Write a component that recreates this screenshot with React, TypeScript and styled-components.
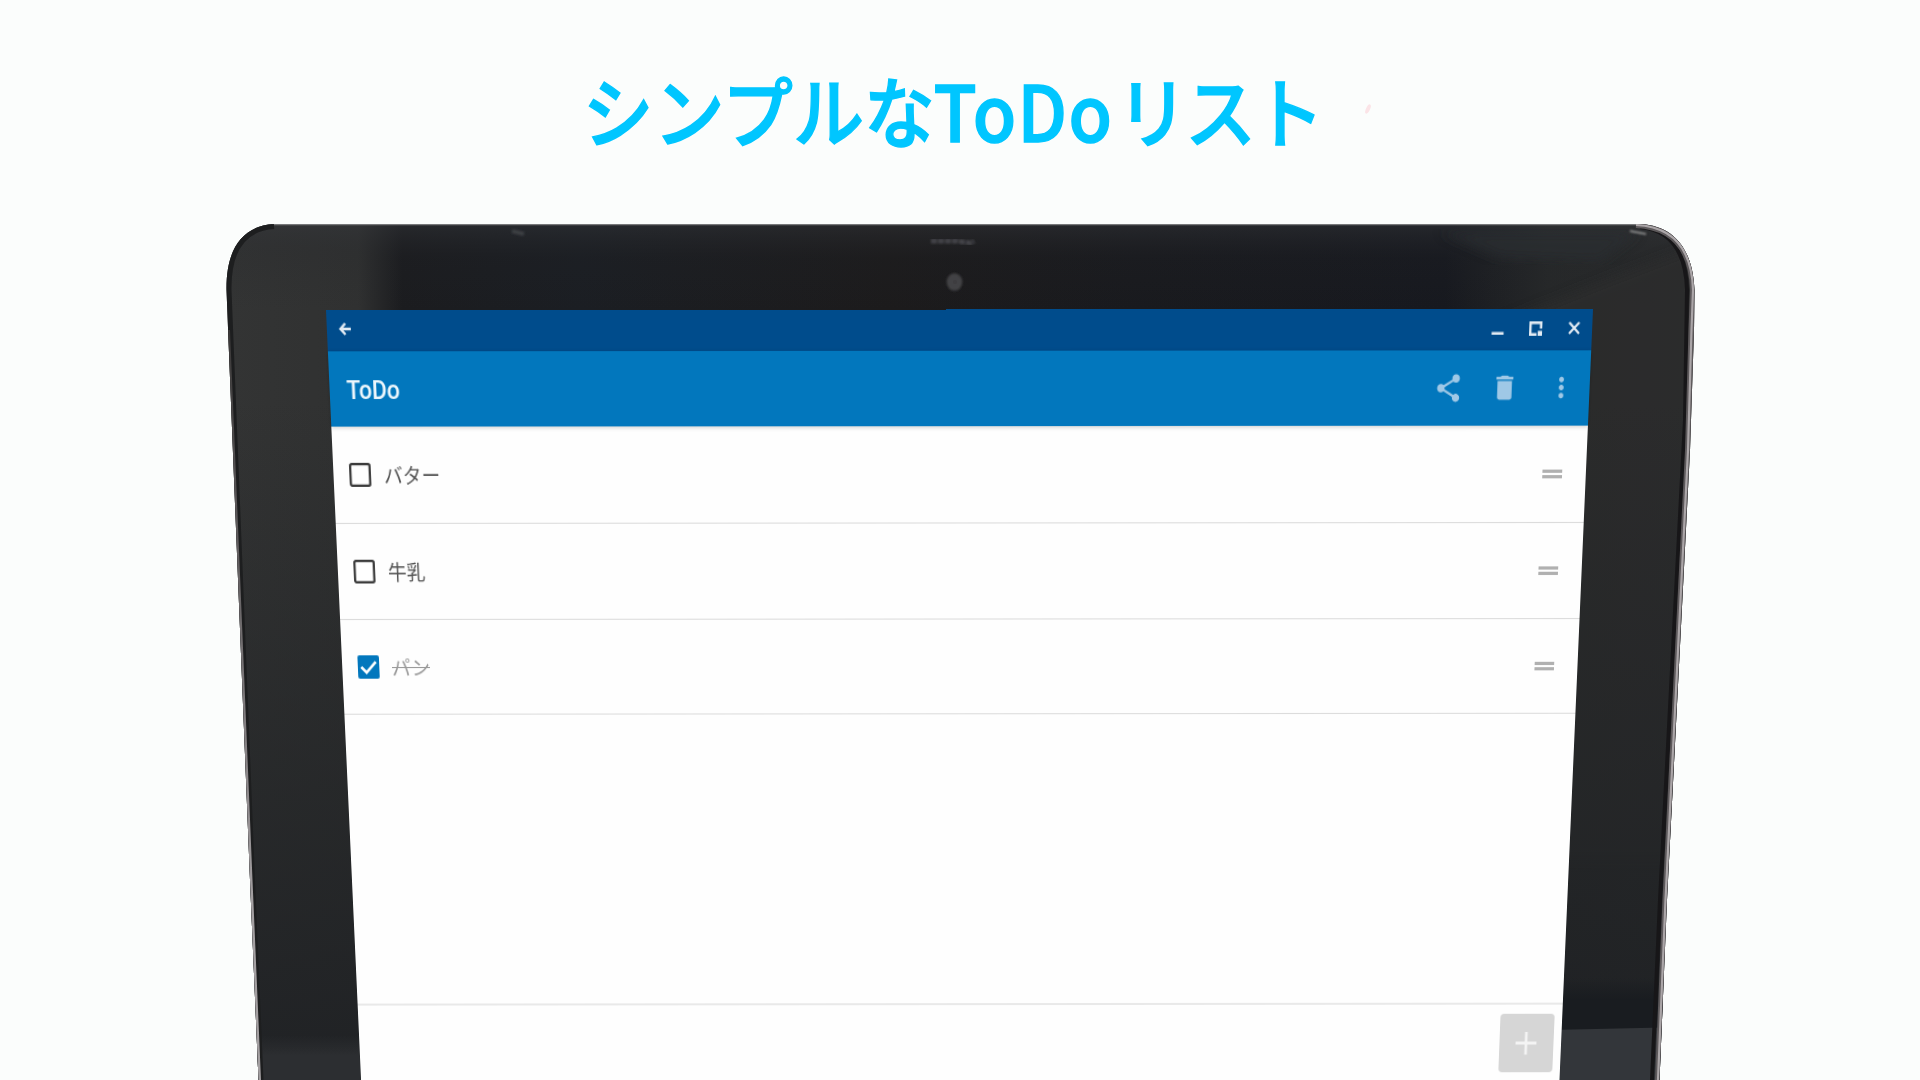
import { useState } from "react";
import styled, { createGlobalStyle } from "styled-components";

type Task = {
    id: number;
    label: string;
    done: boolean;
};

const initialTaskList: Task[] = [
    { id: 1, label: "バター", done: false },
    { id: 2, label: "牛乳", done: false },
    { id: 3, label: "パン", done: true },
];

const GlobalStyle = createGlobalStyle`
    body {
        margin: 0;
        background-color: #fbfdfc;
        font-family: Roboto, "Noto Sans CJK JP", sans-serif;
    }
`;

const Page = styled.div`
    width: 1920px;
    height: 1080px;
    overflow: hidden;
    background-color: #fbfdfc;
`;

// 見出し
const Header = styled.header`
    position: relative;
    height: 224px;
    display: flex;
    justify-content: center;
`;

const Title = styled.h1`
    margin: 0;
    padding: 53px 17px 0 0;
    color: #00c6ff;
    font-family: "Noto Sans CJK JP", sans-serif;
    font-size: 77px;
    font-weight: 500;
    line-height: 112px;
    white-space: nowrap;
    transform: scaleX(0.92);
    -webkit-text-stroke: 1.4px #00c6ff;
`;

const Latin = styled.span`
    margin: 0 4px 0 -1.5px;
    letter-spacing: 1.5px;
`;

const Tail = styled.span`
    letter-spacing: -3px;
`;

const Speck = styled.span`
    position: absolute;
    left: 1366px;
    top: 104px;
    width: 4px;
    height: 10px;
    border-radius: 50%;
    background-color: #fbe4e7;
    transform: rotate(25deg);
`;

const Stage = styled.main`
    position: relative;
    height: 770px;
    padding: 86px 0 0 326px;
`;

const Tablet = styled.svg`
    position: absolute;
    left: 0;
    top: 0;
    width: 1920px;
    height: 856px;
`;

// 画面(奥行きのある台形に変形する)
const Screen = styled.section`
    width: 1267px;
    height: 740px;
    display: flex;
    flex-direction: column;
    background-color: #fefefe;
    transform-origin: 0 0;
    transform: matrix3d(1, -0.0008, 0, 0, 0.051, 1.12, 0, 0.0000787, 0, 0, 1, 0, 0, 0, 0, 1);
`;

const WindowBar = styled.div`
    flex: none;
    box-sizing: border-box;
    height: 36.5px;
    padding: 0 12.5px 2px 11.5px;
    display: flex;
    align-items: center;
    justify-content: space-between;
    background-color: #004c8c;
`;

const WindowButtons = styled.div`
    display: flex;
    align-items: center;
    gap: 25.5px;
`;

const AppBar = styled.div`
    flex: none;
    height: 68.2px;
    padding-left: 17px;
    display: flex;
    align-items: center;
    justify-content: space-between;
    background-color: #0277bd;
    box-shadow: 0 1px 4px rgba(0, 0, 0, 0.2);
`;

const AppName = styled.span`
    padding-top: 3px;
    color: #eef7fc;
    font-size: 23px;
    font-weight: 500;
`;

const Actions = styled.div`
    display: flex;
`;

const Action = styled.div`
    width: 57px;
    display: flex;
    align-items: center;
    justify-content: center;
`;

const List = styled.ul`
    flex: none;
    height: 546.7px;
    margin: 0;
    padding: 0;
    list-style: none;
`;

// タスク1件
const Row = styled.li`
    box-sizing: border-box;
    height: 89.2px;
    padding: 0 24px 0 16px;
    display: flex;
    align-items: center;
    border-bottom: 1px solid #dcdcdc;
`;

const Label = styled.span<{
    $done: boolean;
}>`
    flex: 1;
    margin-left: 13px;
    font-family: "Noto Sans CJK JP", sans-serif;
    font-size: 19px;
    line-height: 28px;
    color: ${props => props.$done ? '#999' : '#555'};
    text-decoration: ${props => props.$done ? 'line-through' : 'none'};
`;

// 並べ替え用のつまみ
const Handle = styled.span`
    box-sizing: border-box;
    width: 20px;
    height: 8px;
    border-top: 3px solid #b0b0b0;
    border-bottom: 3px solid #b0b0b0;
`;

const Footer = styled.div`
    flex: 1;
    display: flex;
    justify-content: flex-end;
    align-items: flex-start;
    padding: 8.5px 8.5px 0 0;
    border-top: 2px solid #e9e9e9;
`;

const AddButton = styled.div`
    width: 57px;
    height: 58.5px;
    display: flex;
    align-items: center;
    justify-content: center;
    border-radius: 4px;
    background-color: #d6d6d6;
`;

// タブレット本体
const TabletBody = () => (
    <Tablet viewBox="0 224 1920 856">
        <defs>
            <linearGradient id="bezel" gradientUnits="userSpaceOnUse" x1="226" y1="0" x2="1695" y2="0">
                <stop offset="0" stopColor="#333434" />
                <stop offset="0.09" stopColor="#303131" />
                <stop offset="0.12" stopColor="#1b1c1f" />
                <stop offset="0.24" stopColor="#1b1e23" />
                <stop offset="0.45" stopColor="#1c1b1c" />
                <stop offset="0.62" stopColor="#191a1e" />
                <stop offset="0.83" stopColor="#17191f" />
                <stop offset="0.9" stopColor="#262829" />
                <stop offset="1" stopColor="#2a2b2c" />
            </linearGradient>
            <linearGradient id="topSheen" gradientUnits="userSpaceOnUse" x1="0" y1="224" x2="0" y2="310">
                <stop offset="0" stopColor="#34363a" stopOpacity="0.5" />
                <stop offset="0.4" stopColor="#24262a" stopOpacity="0.15" />
                <stop offset="1" stopColor="#24262a" stopOpacity="0" />
            </linearGradient>
            <linearGradient id="sideShade" gradientUnits="userSpaceOnUse" x1="0" y1="400" x2="0" y2="1080">
                <stop offset="0" stopColor="#222426" stopOpacity="0" />
                <stop offset="0.6" stopColor="#222426" stopOpacity="0.7" />
                <stop offset="1" stopColor="#1e2023" stopOpacity="0.9" />
            </linearGradient>
            <linearGradient id="leftFloor" gradientUnits="userSpaceOnUse" x1="0" y1="1035" x2="0" y2="1056">
                <stop offset="0" stopColor="#2c2e31" stopOpacity="0" />
                <stop offset="1" stopColor="#2c2e31" />
            </linearGradient>
            <linearGradient id="rightDark" gradientUnits="userSpaceOnUse" x1="0" y1="978" x2="0" y2="1000">
                <stop offset="0" stopColor="#191c20" stopOpacity="0" />
                <stop offset="1" stopColor="#191c20" />
            </linearGradient>
            <linearGradient id="rim" gradientUnits="userSpaceOnUse" x1="0" y1="330" x2="0" y2="900">
                <stop offset="0" stopColor="#3a3838" />
                <stop offset="0.6" stopColor="#777375" />
                <stop offset="1" stopColor="#a39fa1" />
            </linearGradient>
            <clipPath id="bodyClip">
                <path d="M274 224H1640C1678 226 1693 254 1694.5 290L1694 330L1690 450L1667 900L1659.5 1080H258.5L250 880L226.5 290C226 252 240 226 274 224Z" />
            </clipPath>
            <filter id="soft" x="-20%" y="-100%" width="140%" height="300%"><feGaussianBlur stdDeviation="1.1" /></filter>
            <filter id="softer"><feGaussianBlur stdDeviation="6" /></filter>
        </defs>
        <g clipPath="url(#bodyClip)">
            <rect x="220" y="220" width="1480" height="860" fill="url(#bezel)" />
            <rect x="220" y="224" width="1480" height="86" fill="url(#topSheen)" />
            <path d="M1500 322L1610 278L1710 240V860H1500Z" fill="#2e2f2f" opacity="0.6" filter="url(#softer)" />
            <path d="M1440 232H1640L1600 262L1500 258Z" fill="#2c2f31" opacity="0.7" filter="url(#softer)" />
            <rect x="220" y="400" width="1480" height="680" fill="url(#sideShade)" />
            <path d="M240 1035H380V1080H240Z" fill="url(#leftFloor)" />
            <path d="M1550 978H1680V1030H1550Z" fill="url(#rightDark)" />
            <path d="M1550 1030L1680 1027V1080H1550Z" fill="#33363a" />
            {/* 縁 */}
            <path d="M272 224.5H1646" stroke="#77787a" strokeWidth="1.5" fill="none" />
            <path d="M274 226C242 228 228 252 228.5 290L252 880L260.5 1080" stroke="#1d1e1f" strokeWidth="6" fill="none" />
            <path d="M228 330L250.5 880L259 1080" stroke="url(#rim)" strokeWidth="4" fill="none" />
            <path d="M1640 227C1672 230 1686 254 1687 290L1685 420L1660 900L1652 1080" stroke="#171618" strokeWidth="4" fill="none" />
            <path d="M1636 225C1677 227 1692 254 1693 290L1691.5 330L1688 450L1665.5 900L1658 1080" stroke="#5d595b" strokeWidth="6" fill="none" />
            <path d="M1636 225C1677 227 1692 254 1693 290L1691.5 330L1688 450L1665.5 900L1658 1080" stroke="#aba6a8" strokeWidth="2.2" fill="none" />
            <path d="M1630 231L1646 234" stroke="#a9a9a9" strokeWidth="1.5" filter="url(#soft)" />
            <path d="M512 231L524 234" stroke="#3c3f43" strokeWidth="4" filter="url(#soft)" />
        </g>
        {/* ロゴの映り込みとカメラ */}
        <path d="M931 241H957L970 243L974 241" stroke="#424247" strokeWidth="5" strokeDasharray="6 1" fill="none" filter="url(#soft)" />
        <ellipse cx="954.5" cy="282" rx="7.8" ry="8.8" fill="#434245" filter="url(#soft)" />
        <circle cx="955" cy="282" r="2" fill="#3e3d40" />
    </Tablet>
);

const BackIcon = () => (
    <svg width="12" height="12" viewBox="0 0 12 12" fill="none" stroke="#e3ebf3" strokeWidth="2.4">
        <path d="M12 6H1.5M6.5 1L1.6 6L6.5 11" />
    </svg>
);

const MinimizeIcon = () => (
    <svg width="13" height="13" viewBox="0 0 13 13">
        <path d="M0.5 9.5H12.5V12H0.5Z" fill="#e3ebf3" />
    </svg>
);

const MaximizeIcon = () => (
    <svg width="13" height="13" viewBox="0 0 13 13">
        <path d="M0 0H13V6.5H10.6V2.4H2.4V10.6H7.5V13H0Z M8.7 8.5H13V13H8.7Z" fill="#e3ebf3" />
    </svg>
);

const CloseIcon = () => (
    <svg width="12" height="12" viewBox="0 0 12 12" fill="none" stroke="#e3ebf3" strokeWidth="2.2">
        <path d="M1 1L11 11M11 1L1 11" />
    </svg>
);

const ShareIcon = () => (
    <svg width="30" height="30" viewBox="0 0 24 24" fill="#9fc8e6">
        <path d="M18 16.08c-.76 0-1.44.3-1.96.77L8.91 12.7c.05-.23.09-.46.09-.7s-.04-.47-.09-.7l7.05-4.11c.54.5 1.25.81 2.04.81 1.66 0 3-1.34 3-3s-1.34-3-3-3-3 1.34-3 3c0 .24.04.47.09.7L8.04 9.81C7.5 9.31 6.79 9 6 9c-1.66 0-3 1.34-3 3s1.34 3 3 3c.79 0 1.5-.31 2.04-.81l7.12 4.16c-.05.21-.08.43-.08.65 0 1.61 1.31 2.92 2.92 2.92s2.92-1.31 2.92-2.92-1.31-2.92-2.92-2.92z" />
    </svg>
);

const DeleteIcon = () => (
    <svg width="29" height="29" viewBox="0 0 24 24" fill="#9fc8e6">
        <path d="M6 19c0 1.1.9 2 2 2h8c1.1 0 2-.9 2-2V7H6v12zM19 4h-3.5l-1-1h-5l-1 1H5v2h14V4z" />
    </svg>
);

const MoreIcon = () => (
    <svg width="29" height="29" viewBox="0 0 24 24" fill="#9fc8e6">
        <path d="M12 8c1.1 0 2-.9 2-2s-.9-2-2-2-2 .9-2 2 .9 2 2 2zm0 2c-1.1 0-2 .9-2 2s.9 2 2 2 2-.9 2-2-.9-2-2-2zm0 6c-1.1 0-2 .9-2 2s.9 2 2 2 2-.9 2-2-.9-2-2-2z" />
    </svg>
);

const PlusIcon = () => (
    <svg width="24" height="24" viewBox="0 0 24 24" stroke="#f4f4f4" strokeWidth="2.8">
        <path d="M12 1V23.5M1 12H23" />
    </svg>
);

const CheckMark = (props: { checked: boolean; className?: string; onClick: () => void }) => (
    <svg className={props.className} onClick={props.onClick} width="22" height="22" viewBox="0 0 22 22">
        {props.checked ? (
            <>
                <rect width="22" height="22" rx="2" fill="#0277bd" />
                <path d="M3.5 11L8.8 16.2L18.6 6.2" fill="none" stroke="#fff" strokeWidth="2.6" />
            </>
        ) : (
            <rect x="1.2" y="1.2" width="19.6" height="19.6" rx="1.5" fill="#fff" stroke="#3c3c3c" strokeWidth="2.3" />
        )}
    </svg>
);

const CheckBox = styled(CheckMark)`
    flex: none;
    cursor: pointer;
`;

const App = () => {
    const [taskList, setTaskList] = useState<Task[]>(initialTaskList);

    // 完了状態を切り替える
    const toggle = (id: number) => {
        setTaskList(taskList.map((task) => task.id === id ? { ...task, done: !task.done } : task));
    };

    const rowJsxList = taskList.map((task) => {
        return (
            <Row key={task.id}>
                <CheckBox checked={task.done} onClick={() => toggle(task.id)} />
                <Label $done={task.done}>{task.label}</Label>
                <Handle />
            </Row>
        );
    });

    return (
        <>
            <GlobalStyle />
            <Page>
                <Header>
                    <Title>シンプルな<Latin>ToDo</Latin><Tail>リスト</Tail></Title>
                    <Speck />
                </Header>
                <Stage>
                    <TabletBody />
                    <Screen>
                        <WindowBar>
                            <BackIcon />
                            <WindowButtons>
                                <MinimizeIcon />
                                <MaximizeIcon />
                                <CloseIcon />
                            </WindowButtons>
                        </WindowBar>
                        <AppBar>
                            <AppName>ToDo</AppName>
                            <Actions>
                                <Action><ShareIcon /></Action>
                                <Action><DeleteIcon /></Action>
                                <Action><MoreIcon /></Action>
                            </Actions>
                        </AppBar>
                        <List>{rowJsxList}</List>
                        <Footer>
                            <AddButton>
                                <PlusIcon />
                            </AddButton>
                        </Footer>
                    </Screen>
                </Stage>
            </Page>
        </>
    );
};

export default App;
